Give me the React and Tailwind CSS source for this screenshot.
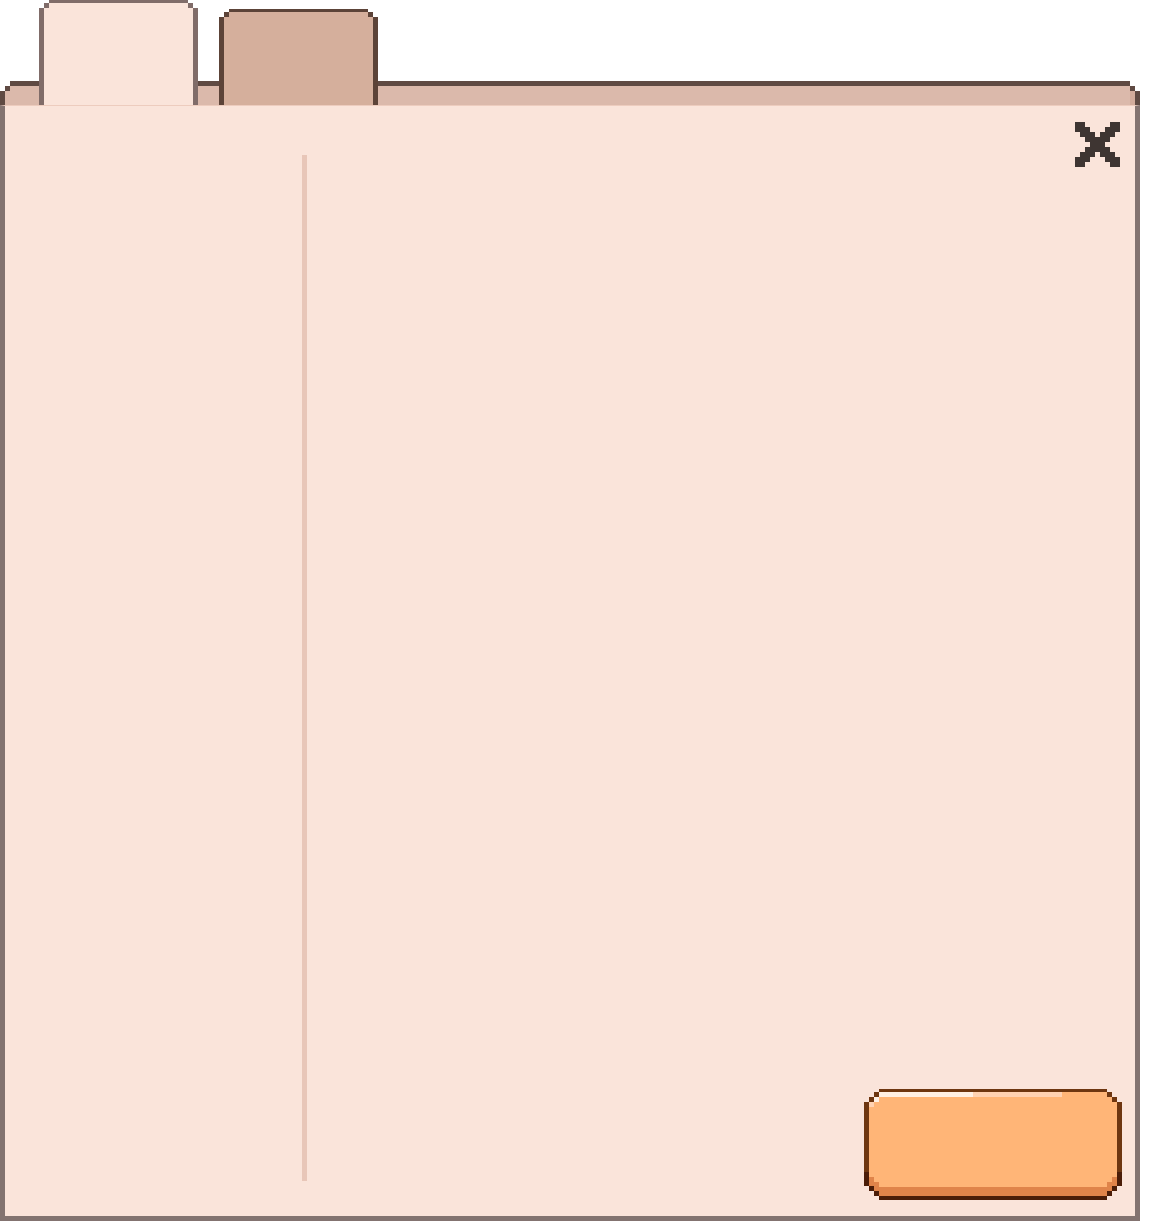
import React from 'react';

// pixel-art window: two folder tabs over a header strip, a split panel, close cross and a blank button

function StripLeft() {
  return (
    <div className="relative h-[24px] w-[39px] shrink-0 border-t-[5px] border-l-[5px] border-[#5f4a43] bg-[#dbb9ab] [clip-path:polygon(10px_0,100%_0,100%_100%,0_100%,0_10px,5px_10px,5px_5px,10px_5px)]">
      <span className="absolute left-0 top-0 h-[5px] w-[5px] bg-[#5f4a43]" />
    </div>
  );
}

function StripRight() {
  return (
    <div className="relative h-[24px] flex-1 border-t-[5px] border-r-[5px] border-[#5f4a43] bg-[#dbb9ab] [clip-path:polygon(0_0,calc(100%_-_10px)_0,calc(100%_-_10px)_5px,calc(100%_-_5px)_5px,calc(100%_-_5px)_10px,100%_10px,100%_100%,0_100%)]">
      <span className="absolute right-0 top-0 h-[5px] w-[5px] bg-[#5f4a43]" />
      <span className="absolute right-0 top-[5px] h-[14px] w-[5px] bg-[#d2ac9c]" />
    </div>
  );
}

function StripMid() {
  return <div className="h-[24px] w-[21px] shrink-0 border-t-[5px] border-[#5f4a43] bg-[#dbb9ab]" />;
}

function Tab({ active }) {
  const tone = active
    ? 'h-[105px] border-[#806c69] bg-[#fae4da]'
    : 'h-[96px] border-[#5c4338] bg-[#d5af9c]';
  const dot = active ? 'bg-[#806c69]' : 'bg-[#5c4338]';
  return (
    <div
      className={`relative w-[159px] shrink-0 border-t-[3px] border-x-[5px] ${tone} [clip-path:polygon(10px_0,calc(100%_-_10px)_0,calc(100%_-_10px)_3px,calc(100%_-_5px)_3px,calc(100%_-_5px)_8px,100%_8px,100%_100%,0_100%,0_8px,5px_8px,5px_3px,10px_3px)]`}
    >
      <span className={`absolute left-0 top-0 h-[5px] w-[5px] ${dot}`} />
      <span className={`absolute right-0 top-0 h-[5px] w-[5px] ${dot}`} />
    </div>
  );
}

function CloseCross() {
  const rows = [
    [[0, 2], [7, 2]],
    [[0, 3], [6, 3]],
    [[1, 3], [5, 3]],
    [[2, 5]],
    [[3, 3]],
    [[2, 5]],
    [[1, 3], [5, 3]],
    [[0, 3], [6, 3]],
    [[0, 2], [7, 2]],
  ];
  return (
    <svg width="45" height="45" viewBox="0 0 9 9" shapeRendering="crispEdges" aria-label="close">
      {rows.map((segs, y) =>
        segs.map(([x, w]) => (
          <rect key={`${y}-${x}`} x={x} y={y} width={w} height={1} fill="#3e3532" />
        ))
      )}
    </svg>
  );
}

function PixelButton() {
  return (
    <button className="relative h-[111px] w-[258px] bg-[linear-gradient(to_bottom,#6e3610_0,#6e3610_83px,#4b1d08_83px)] [clip-path:polygon(15px_0,calc(100%_-_15px)_0,calc(100%_-_15px)_3px,calc(100%_-_10px)_3px,calc(100%_-_10px)_8px,calc(100%_-_5px)_8px,calc(100%_-_5px)_13px,100%_13px,100%_calc(100%_-_14px),calc(100%_-_5px)_calc(100%_-_14px),calc(100%_-_5px)_calc(100%_-_9px),calc(100%_-_10px)_calc(100%_-_9px),calc(100%_-_10px)_calc(100%_-_4px),calc(100%_-_15px)_calc(100%_-_4px),calc(100%_-_15px)_100%,15px_100%,15px_calc(100%_-_4px),10px_calc(100%_-_4px),10px_calc(100%_-_9px),5px_calc(100%_-_9px),5px_calc(100%_-_14px),0_calc(100%_-_14px),0_13px,5px_13px,5px_8px,10px_8px,10px_3px,15px_3px)]">
      <span className="absolute inset-x-[5px] top-[3px] bottom-[4px] bg-[linear-gradient(to_bottom,#ffb577_0,#ffb577_calc(100%_-_9px),#e0844a_calc(100%_-_9px))] [clip-path:polygon(10px_0,calc(100%_-_10px)_0,calc(100%_-_10px)_5px,calc(100%_-_5px)_5px,calc(100%_-_5px)_10px,100%_10px,100%_calc(100%_-_10px),calc(100%_-_5px)_calc(100%_-_10px),calc(100%_-_5px)_calc(100%_-_5px),calc(100%_-_10px)_calc(100%_-_5px),calc(100%_-_10px)_100%,10px_100%,10px_calc(100%_-_5px),5px_calc(100%_-_5px),5px_calc(100%_-_10px),0_calc(100%_-_10px),0_10px,5px_10px,5px_5px,10px_5px)]" />
      <span className="absolute left-[5px] top-[88px] h-[9px] w-[5px] bg-[#e0844a]" />
      <span className="absolute left-[10px] top-[93px] h-[9px] w-[5px] bg-[#e0844a]" />
      <span className="absolute right-[5px] top-[88px] h-[9px] w-[5px] bg-[#e0844a]" />
      <span className="absolute right-[10px] top-[93px] h-[9px] w-[5px] bg-[#e0844a]" />
      <span className="absolute left-[15px] top-[3px] h-[5px] w-[94px] bg-[#fff0e4]" />
      <span className="absolute left-[109px] top-[3px] h-[5px] w-[89px] bg-[#ffd2b2]" />
      <span className="absolute left-[10px] top-[8px] h-[5px] w-[5px] bg-[#fff0e4]" />
      <span className="absolute left-[5px] top-[13px] h-[5px] w-[5px] bg-[#ffd2b2]" />
    </button>
  );
}

export default function App() {
  return (
    <div className="h-[1221px] w-full bg-white">
      <div className="flex h-[1221px] w-[1140px] flex-col">
        <div className="flex h-[105px] items-end">
          <StripLeft />
          <Tab active />
          <StripMid />
          <Tab />
          <StripRight />
        </div>

        <div className="flex flex-1 border-x-[5px] border-b-[5px] border-t border-[#837370] border-t-[#edccbe] bg-[#fae4da]">
          <div className="w-[297px] shrink-0" />
          <div className="mt-[49px] mb-[35px] w-[5px] shrink-0 bg-[#e8c6b8]" />
          <div className="flex flex-1 flex-col">
            <div className="flex justify-end pt-[16px] pr-[15px]">
              <CloseCross />
            </div>
            <div className="mt-auto flex justify-end pr-[13px] pb-[16px]">
              <PixelButton />
            </div>
          </div>
        </div>
      </div>
    </div>
  );
}
